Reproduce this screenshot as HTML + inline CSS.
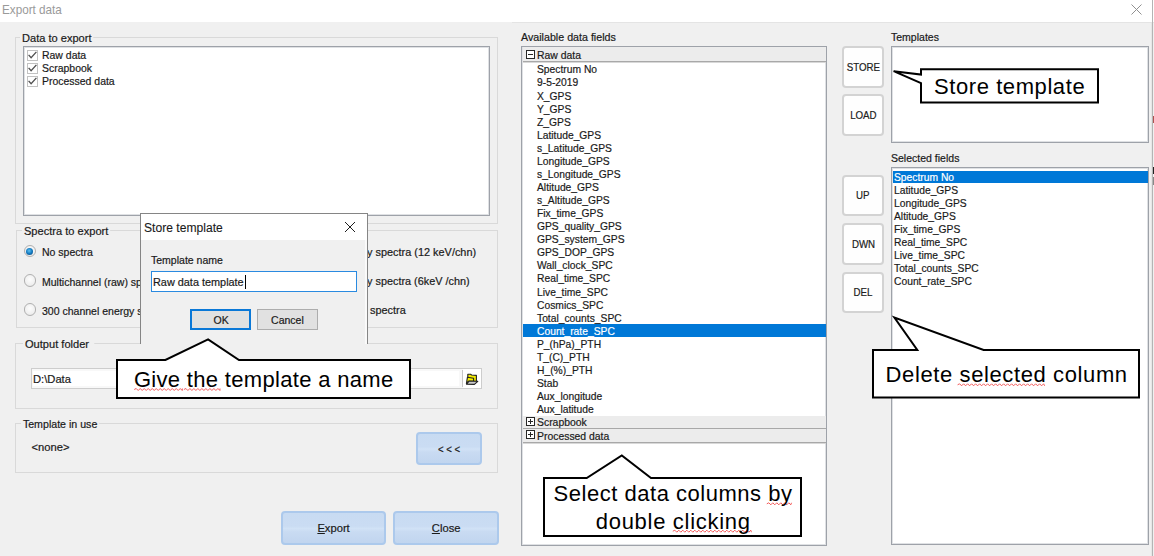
<!DOCTYPE html>
<html><head><meta charset="utf-8">
<style>
*{margin:0;padding:0;box-sizing:border-box}
html,body{width:1154px;height:556px;overflow:hidden;background:#f0f0f0;font-family:"Liberation Sans",sans-serif;color:#000}
body{position:relative}
.a{position:absolute}
.t{position:absolute;white-space:nowrap;line-height:1;font-size:11px;-webkit-text-stroke:0.2px currentColor}
.c{-webkit-text-stroke:0}
</style></head><body>
<div class="a" style="left:0px;top:0px;width:1154px;height:22px;background:#fff"></div>
<div class="a" style="left:512px;top:22px;width:642px;height:1px;background:#e4e4e4"></div>
<div class="t" style="left:2.00px;top:3.77px;font-size:12.2px;color:#9a9a9a;transform:scaleX(0.96);transform-origin:0 0;-webkit-text-stroke:0;">Export data</div>
<svg class="a" style="left:1130px;top:3px" width="13" height="13"><path d="M1.5 1.5L11.5 11.5M11.5 1.5L1.5 11.5" stroke="#909090" stroke-width="1"/></svg>
<div class="a" style="left:1150.5px;top:23px;width:1.5px;height:533px;background:#e6e6e6"></div>
<div class="a" style="left:1152px;top:0px;width:1px;height:556px;background:#b4b4b4"></div>
<div class="a" style="left:1153px;top:116px;width:1px;height:7px;background:#b05050"></div>
<div class="a" style="left:1153px;top:166.5px;width:1px;height:7px;background:#222"></div>
<div class="a" style="left:1153px;top:177px;width:1px;height:7.5px;background:#888"></div>
<div class="a" style="left:15px;top:37px;width:483px;height:187px;border:1px solid #d9d9d9"></div>
<div class="t" style="left:20.00px;top:33.02px;font-size:11.2px;color:#1a1a1a;transform:scaleX(0.99);transform-origin:0 0;padding:0 2px;background:#f0f0f0;">Data to export</div>
<div class="a" style="left:23px;top:46px;width:467px;height:170px;background:#fff;border:1px solid #9ea2a9;box-shadow:inset 0 0 0 1px #dfe1e4"></div>
<div class="a" style="left:27px;top:49.6px;width:11px;height:11px;border:1px solid #c2c2c2;background:#fff"></div>
<svg class="a" style="left:27px;top:49.6px" width="11" height="11"><path d="M1.6 4.9L4.1 7.7L9.4 1.9" fill="none" stroke="#505050" stroke-width="1.35"/></svg>
<div class="t" style="left:41.60px;top:50.12px;font-size:11.2px;color:#1a1a1a;transform:scaleX(0.935);transform-origin:0 0;">Raw data</div>
<div class="a" style="left:27px;top:62.6px;width:11px;height:11px;border:1px solid #c2c2c2;background:#fff"></div>
<svg class="a" style="left:27px;top:62.6px" width="11" height="11"><path d="M1.6 4.9L4.1 7.7L9.4 1.9" fill="none" stroke="#505050" stroke-width="1.35"/></svg>
<div class="t" style="left:41.60px;top:63.12px;font-size:11.2px;color:#1a1a1a;transform:scaleX(0.935);transform-origin:0 0;">Scrapbook</div>
<div class="a" style="left:27px;top:75.6px;width:11px;height:11px;border:1px solid #c2c2c2;background:#fff"></div>
<svg class="a" style="left:27px;top:75.6px" width="11" height="11"><path d="M1.6 4.9L4.1 7.7L9.4 1.9" fill="none" stroke="#505050" stroke-width="1.35"/></svg>
<div class="t" style="left:41.60px;top:76.12px;font-size:11.2px;color:#1a1a1a;transform:scaleX(0.935);transform-origin:0 0;">Processed data</div>
<div class="a" style="left:16px;top:230px;width:482px;height:98px;border:1px solid #d9d9d9"></div>
<div class="t" style="left:21.50px;top:226.02px;font-size:11.2px;color:#1a1a1a;transform:scaleX(0.99);transform-origin:0 0;padding:0 2px;background:#f0f0f0;">Spectra to export</div>
<div class="a" style="left:23.5px;top:244.95px;width:12.5px;height:12.5px;border-radius:50%;border:1px solid #b0b0b0;background:radial-gradient(circle at 50% 40%,#fdfdfd 0,#eeeeee 70%,#dedede 100%)"></div>
<div class="a" style="left:26.3px;top:247.50px;width:7px;height:7px;border-radius:50%;background:radial-gradient(circle at 45% 40%,#5ec2f2 0,#1279c0 50%,#0a3f70 100%)"></div>
<div class="t" style="left:41.60px;top:247.42px;font-size:11.2px;color:#1a1a1a;transform:scaleX(0.94);transform-origin:0 0;">No spectra</div>
<div class="a" style="left:23.5px;top:274.05px;width:12.5px;height:12.5px;border-radius:50%;border:1px solid #b0b0b0;background:radial-gradient(circle at 50% 40%,#fdfdfd 0,#eeeeee 70%,#dedede 100%)"></div>
<div class="t" style="left:41.60px;top:276.92px;font-size:11.2px;color:#1a1a1a;transform:scaleX(0.94);transform-origin:0 0;">Multichannel (raw) spectra</div>
<div class="a" style="left:23.5px;top:303.15px;width:12.5px;height:12.5px;border-radius:50%;border:1px solid #b0b0b0;background:radial-gradient(circle at 50% 40%,#fdfdfd 0,#eeeeee 70%,#dedede 100%)"></div>
<div class="t" style="left:41.60px;top:306.22px;font-size:11.2px;color:#1a1a1a;transform:scaleX(0.94);transform-origin:0 0;">300 channel energy spectra</div>
<div class="t" style="left:367.30px;top:247.42px;font-size:11.2px;color:#1a1a1a;transform:scaleX(0.975);transform-origin:0 0;">y spectra (12 keV/chn)</div>
<div class="t" style="left:367.30px;top:276.12px;font-size:11.2px;color:#1a1a1a;transform:scaleX(0.971);transform-origin:0 0;">y spectra (6keV /chn)</div>
<div class="t" style="left:369.80px;top:305.32px;font-size:11.2px;color:#1a1a1a;transform:scaleX(0.975);transform-origin:0 0;">spectra</div>
<div class="a" style="left:15px;top:343px;width:483px;height:66px;border:1px solid #d9d9d9"></div>
<div class="t" style="left:23.00px;top:339.02px;font-size:11.2px;color:#1a1a1a;transform:scaleX(0.99);transform-origin:0 0;padding:0 2px;background:#f0f0f0;">Output folder&nbsp;</div>
<div class="a" style="left:31px;top:368.2px;width:451px;height:20.5px;background:#f8f8f8;border:1px solid #cdcdcd"></div>
<div class="a" style="left:33px;top:370.5px;width:426px;height:15.5px;background:#fff"></div>
<div class="a" style="left:463px;top:369.2px;width:18px;height:18.5px;background:#fff"></div>
<div class="a" style="left:461.5px;top:370px;width:1.2px;height:16.5px;background:#c6c6c6"></div>
<div class="t" style="left:33.00px;top:374.22px;font-size:11.2px;color:#1a1a1a;transform:scaleX(1.0);transform-origin:0 0;">D:\Data</div>
<svg class="a" style="left:464px;top:372px" width="16" height="14" viewBox="0 0 16 14">
<path d="M3.8 2.2 L6.6 2.2 L7.6 3.0 L12.4 3.4 L12.4 9.5 L3.8 9.5 Z" fill="#f2ea00" stroke="#222" stroke-width="1.1" stroke-linejoin="round"/>
<path d="M3.4 5.3 L9.6 6.2 L9.6 9.1 L4.6 9.2 L2.4 11.6 Z" fill="#f7ef00" stroke="#222" stroke-width="1.1" stroke-linejoin="round"/>
<path d="M2.6 12.2 L10.4 12.4 L13.8 9.3 L5 9.1 Z" fill="#c9c9c9" stroke="#222" stroke-width="1.1" stroke-linejoin="round"/>
</svg>
<div class="a" style="left:15px;top:423px;width:483px;height:50px;border:1px solid #d9d9d9"></div>
<div class="t" style="left:20.50px;top:419.02px;font-size:11.2px;color:#1a1a1a;transform:scaleX(0.95);transform-origin:0 0;padding:0 2px;background:#f0f0f0;">Template in use</div>
<div class="t" style="left:31.50px;top:442.32px;font-size:11.2px;color:#1a1a1a;transform:scaleX(1.0);transform-origin:0 0;">&lt;none&gt;</div>
<div class="a" style="left:416.3px;top:432px;width:65.7px;height:33.2px;background:linear-gradient(#c8dbf2 0%,#cadcf3 44%,#d1e2f6 52%,#c9dbf2 62%,#c1d5ef 100%);border:2px solid #acc9ec;border-radius:4px"></div>
<div class="t" style="left:416.30px;width:65.70px;top:443.61px;font-size:10.5px;text-align:center;color:#1a1a1a;"><span style="display:inline-block;transform:scaleX(0.92);transform-origin:50% 0">&lt; &lt; &lt;</span></div>
<div class="a" style="left:280.8px;top:511px;width:105.5px;height:34px;background:linear-gradient(#c8dbf2 0%,#cadcf3 44%,#d1e2f6 52%,#c9dbf2 62%,#c1d5ef 100%);border:2px solid #acc9ec;border-radius:4px"></div>
<div class="t" style="left:280.80px;width:105.50px;top:522.82px;font-size:11.2px;text-align:center;color:#1a1a1a;"><span style="display:inline-block;transform:scaleX(1.0);transform-origin:50% 0"><u>E</u>xport</span></div>
<div class="a" style="left:393.3px;top:511px;width:105.7px;height:34px;background:linear-gradient(#c8dbf2 0%,#cadcf3 44%,#d1e2f6 52%,#c9dbf2 62%,#c1d5ef 100%);border:2px solid #acc9ec;border-radius:4px"></div>
<div class="t" style="left:393.30px;width:105.70px;top:522.82px;font-size:11.2px;text-align:center;color:#1a1a1a;"><span style="display:inline-block;transform:scaleX(1.0);transform-origin:50% 0"><u>C</u>lose</span></div>
<div class="a" style="left:140px;top:213px;width:228px;height:130.5px;background:#f0f0f0;border:1px solid #858585;border-bottom:none"></div>
<div class="a" style="left:141px;top:214px;width:226px;height:26px;background:#fff"></div>
<div class="a" style="left:365px;top:240px;width:1.5px;height:103.5px;background:#fafafa"></div>
<div class="t" style="left:144.30px;top:221.79px;font-size:12.3px;color:#1a1a1a;transform:scaleX(0.985);transform-origin:0 0;-webkit-text-stroke:0.1px currentColor;">Store template</div>
<svg class="a" style="left:344px;top:221px" width="12" height="12"><path d="M1 1L11 11M11 1L1 11" stroke="#1e1e1e" stroke-width="1"/></svg>
<div class="t" style="left:150.70px;top:255.22px;font-size:11.2px;color:#1a1a1a;transform:scaleX(0.94);transform-origin:0 0;">Template name</div>
<div class="a" style="left:151px;top:271.4px;width:206px;height:20.5px;background:#fff;border:1px solid #2a8ae0"></div>
<div class="t" style="left:153.30px;top:276.52px;font-size:11.2px;color:#1a1a1a;transform:scaleX(0.972);transform-origin:0 0;">Raw data template</div>
<div class="a" style="left:245.3px;top:275px;width:1px;height:14px;background:#000"></div>
<div class="a" style="left:190.2px;top:308.5px;width:61px;height:21px;background:#e1e1e1;border:2px solid #0a78d7"></div>
<div class="t" style="left:190.20px;width:61.00px;top:314.82px;font-size:11.2px;text-align:center;color:#1a1a1a;"><span style="display:inline-block;transform:scaleX(0.94);transform-origin:50% 0">OK</span></div>
<div class="a" style="left:257.2px;top:308.5px;width:61.2px;height:21px;background:#e1e1e1;border:1px solid #adadad"></div>
<div class="t" style="left:257.20px;width:61.20px;top:314.82px;font-size:11.2px;text-align:center;color:#1a1a1a;"><span style="display:inline-block;transform:scaleX(0.94);transform-origin:50% 0">Cancel</span></div>
<div class="t" style="left:521.20px;top:32.12px;font-size:11.2px;color:#1a1a1a;transform:scaleX(0.955);transform-origin:0 0;">Available data fields</div>
<div class="a" style="left:521px;top:46px;width:306px;height:499.5px;background:#fff;border:1px solid #9ea2a9;box-shadow:inset 0 0 0 1px #dfe1e4"></div>
<div class="a" style="left:523px;top:47px;width:303px;height:15px;background:#ececec;border-bottom:1px solid #a8a8a8;box-shadow:0 1px 0 #d8d8d8"></div>
<div class="a" style="left:526px;top:50.0px;width:9.2px;height:9.2px;border:1px solid #262626;background:#fff"></div>
<div class="a" style="left:528px;top:54.1px;width:5.2px;height:1.1px;background:#262626"></div>
<div class="t" style="left:536.50px;top:50.42px;font-size:11.2px;color:#1a1a1a;transform:scaleX(0.93);transform-origin:0 0;">Raw data</div>
<div class="t" style="left:536.80px;top:64.42px;font-size:11.2px;color:#1a1a1a;transform:scaleX(0.92);transform-origin:0 0;">Spectrum No</div>
<div class="t" style="left:536.80px;top:77.48px;font-size:11.2px;color:#1a1a1a;transform:scaleX(0.92);transform-origin:0 0;">9-5-2019</div>
<div class="t" style="left:536.80px;top:90.55px;font-size:11.2px;color:#1a1a1a;transform:scaleX(0.92);transform-origin:0 0;">X_GPS</div>
<div class="t" style="left:536.80px;top:103.61px;font-size:11.2px;color:#1a1a1a;transform:scaleX(0.92);transform-origin:0 0;">Y_GPS</div>
<div class="t" style="left:536.80px;top:116.68px;font-size:11.2px;color:#1a1a1a;transform:scaleX(0.92);transform-origin:0 0;">Z_GPS</div>
<div class="t" style="left:536.80px;top:129.74px;font-size:11.2px;color:#1a1a1a;transform:scaleX(0.92);transform-origin:0 0;">Latitude_GPS</div>
<div class="t" style="left:536.80px;top:142.81px;font-size:11.2px;color:#1a1a1a;transform:scaleX(0.92);transform-origin:0 0;">s_Latitude_GPS</div>
<div class="t" style="left:536.80px;top:155.87px;font-size:11.2px;color:#1a1a1a;transform:scaleX(0.92);transform-origin:0 0;">Longitude_GPS</div>
<div class="t" style="left:536.80px;top:168.94px;font-size:11.2px;color:#1a1a1a;transform:scaleX(0.92);transform-origin:0 0;">s_Longitude_GPS</div>
<div class="t" style="left:536.80px;top:182.00px;font-size:11.2px;color:#1a1a1a;transform:scaleX(0.92);transform-origin:0 0;">Altitude_GPS</div>
<div class="t" style="left:536.80px;top:195.07px;font-size:11.2px;color:#1a1a1a;transform:scaleX(0.92);transform-origin:0 0;">s_Altitude_GPS</div>
<div class="t" style="left:536.80px;top:208.13px;font-size:11.2px;color:#1a1a1a;transform:scaleX(0.92);transform-origin:0 0;">Fix_time_GPS</div>
<div class="t" style="left:536.80px;top:221.20px;font-size:11.2px;color:#1a1a1a;transform:scaleX(0.92);transform-origin:0 0;">GPS_quality_GPS</div>
<div class="t" style="left:536.80px;top:234.26px;font-size:11.2px;color:#1a1a1a;transform:scaleX(0.92);transform-origin:0 0;">GPS_system_GPS</div>
<div class="t" style="left:536.80px;top:247.33px;font-size:11.2px;color:#1a1a1a;transform:scaleX(0.92);transform-origin:0 0;">GPS_DOP_GPS</div>
<div class="t" style="left:536.80px;top:260.39px;font-size:11.2px;color:#1a1a1a;transform:scaleX(0.92);transform-origin:0 0;">Wall_clock_SPC</div>
<div class="t" style="left:536.80px;top:273.46px;font-size:11.2px;color:#1a1a1a;transform:scaleX(0.92);transform-origin:0 0;">Real_time_SPC</div>
<div class="t" style="left:536.80px;top:286.52px;font-size:11.2px;color:#1a1a1a;transform:scaleX(0.92);transform-origin:0 0;">Live_time_SPC</div>
<div class="t" style="left:536.80px;top:299.59px;font-size:11.2px;color:#1a1a1a;transform:scaleX(0.92);transform-origin:0 0;">Cosmics_SPC</div>
<div class="t" style="left:536.80px;top:312.65px;font-size:11.2px;color:#1a1a1a;transform:scaleX(0.92);transform-origin:0 0;">Total_counts_SPC</div>
<div class="a" style="left:523px;top:323.6px;width:303px;height:13px;background:#0078d7"></div>
<div class="t" style="left:536.80px;top:325.72px;font-size:11.2px;color:#fff;transform:scaleX(0.92);transform-origin:0 0;">Count_rate_SPC</div>
<div class="t" style="left:536.80px;top:338.78px;font-size:11.2px;color:#1a1a1a;transform:scaleX(0.92);transform-origin:0 0;">P_(hPa)_PTH</div>
<div class="t" style="left:536.80px;top:351.85px;font-size:11.2px;color:#1a1a1a;transform:scaleX(0.92);transform-origin:0 0;">T_(C)_PTH</div>
<div class="t" style="left:536.80px;top:364.91px;font-size:11.2px;color:#1a1a1a;transform:scaleX(0.92);transform-origin:0 0;">H_(%)_PTH</div>
<div class="t" style="left:536.80px;top:377.98px;font-size:11.2px;color:#1a1a1a;transform:scaleX(0.92);transform-origin:0 0;">Stab</div>
<div class="t" style="left:536.80px;top:391.04px;font-size:11.2px;color:#1a1a1a;transform:scaleX(0.92);transform-origin:0 0;">Aux_longitude</div>
<div class="t" style="left:536.80px;top:404.11px;font-size:11.2px;color:#1a1a1a;transform:scaleX(0.92);transform-origin:0 0;">Aux_latitude</div>
<div class="a" style="left:523px;top:416px;width:303px;height:13px;background:#ececec;border-bottom:1px solid #a8a8a8;box-shadow:0 1px 0 #d8d8d8"></div>
<div class="a" style="left:526px;top:417.2px;width:9.2px;height:9.2px;border:1px solid #262626;background:#fff"></div>
<div class="a" style="left:528px;top:421.3px;width:5.2px;height:1.1px;background:#262626"></div>
<div class="a" style="left:530.05px;top:419.2px;width:1.1px;height:5.2px;background:#262626"></div>
<div class="t" style="left:536.50px;top:416.62px;font-size:11.2px;color:#1a1a1a;transform:scaleX(0.93);transform-origin:0 0;">Scrapbook</div>
<div class="a" style="left:523px;top:429px;width:303px;height:14px;background:#ececec;border-bottom:1px solid #a8a8a8;box-shadow:0 1px 0 #d8d8d8"></div>
<div class="a" style="left:526px;top:430.2px;width:9.2px;height:9.2px;border:1px solid #262626;background:#fff"></div>
<div class="a" style="left:528px;top:434.3px;width:5.2px;height:1.1px;background:#262626"></div>
<div class="a" style="left:530.05px;top:432.2px;width:1.1px;height:5.2px;background:#262626"></div>
<div class="t" style="left:536.50px;top:430.82px;font-size:11.2px;color:#1a1a1a;transform:scaleX(0.93);transform-origin:0 0;">Processed data</div>
<div class="a" style="left:842px;top:46.3px;width:42px;height:41.5px;background:#fefefe;border:2px solid #d3d3d3;border-radius:4px"></div>
<div class="t" style="left:842.00px;width:42.00px;top:61.63px;font-size:11.3px;text-align:center;color:#202020;"><span style="display:inline-block;transform:scaleX(0.86);transform-origin:50% 0">STORE</span></div>
<div class="a" style="left:842px;top:94.0px;width:42px;height:41.5px;background:#fefefe;border:2px solid #d3d3d3;border-radius:4px"></div>
<div class="t" style="left:842.00px;width:42.00px;top:109.73px;font-size:11.3px;text-align:center;color:#202020;"><span style="display:inline-block;transform:scaleX(0.86);transform-origin:50% 0">LOAD</span></div>
<div class="a" style="left:842px;top:174.8px;width:42px;height:41.5px;background:#fefefe;border:2px solid #d3d3d3;border-radius:4px"></div>
<div class="t" style="left:842.00px;width:42.00px;top:190.13px;font-size:11.3px;text-align:center;color:#202020;"><span style="display:inline-block;transform:scaleX(0.86);transform-origin:50% 0">UP</span></div>
<div class="a" style="left:842px;top:223.0px;width:42px;height:41.5px;background:#fefefe;border:2px solid #d3d3d3;border-radius:4px"></div>
<div class="t" style="left:842.00px;width:42.00px;top:238.53px;font-size:11.3px;text-align:center;color:#202020;"><span style="display:inline-block;transform:scaleX(0.86);transform-origin:50% 0">DWN</span></div>
<div class="a" style="left:842px;top:271.7px;width:42px;height:41.5px;background:#fefefe;border:2px solid #d3d3d3;border-radius:4px"></div>
<div class="t" style="left:842.00px;width:42.00px;top:286.73px;font-size:11.3px;text-align:center;color:#202020;"><span style="display:inline-block;transform:scaleX(0.86);transform-origin:50% 0">DEL</span></div>
<div class="t" style="left:890.80px;top:32.42px;font-size:11.2px;color:#1a1a1a;transform:scaleX(0.94);transform-origin:0 0;">Templates</div>
<div class="a" style="left:890.5px;top:46.3px;width:258.8px;height:97px;background:#fff;border:1px solid #9ea2a9;box-shadow:inset 0 0 0 1px #dfe1e4"></div>
<div class="t" style="left:890.60px;top:153.02px;font-size:11.2px;color:#1a1a1a;transform:scaleX(0.94);transform-origin:0 0;">Selected fields</div>
<div class="a" style="left:890.8px;top:167.3px;width:258.5px;height:378px;background:#fff;border:1px solid #9ea2a9;box-shadow:inset 0 0 0 1px #dfe1e4"></div>
<div class="a" style="left:893.2px;top:170.5px;width:254.5px;height:12px;background:#0078d7"></div>
<div class="t" style="left:894.40px;top:171.62px;font-size:11.2px;color:#fff;transform:scaleX(0.92);transform-origin:0 0;">Spectrum No</div>
<div class="t" style="left:894.40px;top:184.62px;font-size:11.2px;color:#1a1a1a;transform:scaleX(0.92);transform-origin:0 0;">Latitude_GPS</div>
<div class="t" style="left:894.40px;top:197.62px;font-size:11.2px;color:#1a1a1a;transform:scaleX(0.92);transform-origin:0 0;">Longitude_GPS</div>
<div class="t" style="left:894.40px;top:210.62px;font-size:11.2px;color:#1a1a1a;transform:scaleX(0.92);transform-origin:0 0;">Altitude_GPS</div>
<div class="t" style="left:894.40px;top:223.62px;font-size:11.2px;color:#1a1a1a;transform:scaleX(0.92);transform-origin:0 0;">Fix_time_GPS</div>
<div class="t" style="left:894.40px;top:236.62px;font-size:11.2px;color:#1a1a1a;transform:scaleX(0.92);transform-origin:0 0;">Real_time_SPC</div>
<div class="t" style="left:894.40px;top:249.62px;font-size:11.2px;color:#1a1a1a;transform:scaleX(0.92);transform-origin:0 0;">Live_time_SPC</div>
<div class="t" style="left:894.40px;top:262.62px;font-size:11.2px;color:#1a1a1a;transform:scaleX(0.92);transform-origin:0 0;">Total_counts_SPC</div>
<div class="t" style="left:894.40px;top:275.62px;font-size:11.2px;color:#1a1a1a;transform:scaleX(0.92);transform-origin:0 0;">Count_rate_SPC</div>
<svg class="a" style="left:0;top:0" width="1154" height="556"><polygon points="117,360 165.4,360 208.1,339.3 239,360 410,360 410,398 117,398" fill="#fff" stroke="#000" stroke-width="2" stroke-linejoin="miter"/><path d="M134.2 389.5 L136.2 388.5 L138.2 390.5 L140.2 388.5 L142.2 390.5 L144.2 388.5 L146.2 390.5 L148.2 388.5 L150.2 390.5 L152.2 388.5 L154.2 390.5 L156.2 388.5 L158.2 390.5 L160.2 388.5 L162.2 390.5 L164.2 388.5 L166.2 390.5 L168.2 388.5 L170.2 390.5 L172.2 388.5 L174.2 390.5 L176.2 388.5 L178.2 390.5 L180.2 388.5 L182.2 390.5 L182.4 388.5" fill="none" stroke="#f04848" stroke-width="0.9"/><path d="M183.9 389.5 L185.9 388.5 L187.9 390.5 L189.9 388.5 L191.9 390.5 L193.9 388.5 L195.9 390.5 L197.9 388.5 L199.9 390.5 L201.9 388.5 L203.9 390.5 L205.9 388.5 L207.9 390.5 L209.9 388.5 L211.9 390.5 L213.9 388.5 L215.9 390.5 L217.9 388.5 L219.9 390.5 L220 388.5" fill="none" stroke="#f04848" stroke-width="0.9"/></svg>
<div class="t" style="left:133.90px;top:369.48px;font-size:22px;color:#000;letter-spacing:0.32px;-webkit-text-stroke:0;">Give the template a name</div>
<svg class="a" style="left:0;top:0" width="1154" height="556"><polygon points="544,478 586.7,478 621.8,455.5 651,478 801,478 801,536 544,536" fill="#fff" stroke="#000" stroke-width="2" stroke-linejoin="miter"/><path d="M766.8 503.8 L768.8 502.8 L770.8 504.8 L772.8 502.8 L774.8 504.8 L776.8 502.8 L778.8 504.8 L780.8 502.8 L782.8 504.8 L784.8 502.8 L786.8 504.8 L788.8 502.8 L790.8 504.8 L791.5 502.8" fill="none" stroke="#f04848" stroke-width="0.9"/><path d="M672.8 531.2 L674.8 530.2 L676.8 532.2 L678.8 530.2 L680.8 532.2 L682.8 530.2 L684.8 532.2 L686.8 530.2 L688.8 532.2 L690.8 530.2 L692.8 532.2 L694.8 530.2 L696.8 532.2 L698.8 530.2 L700.8 532.2 L702.8 530.2 L704.8 532.2 L706.8 530.2 L708.8 532.2 L710.8 530.2 L712.8 532.2 L714.8 530.2 L716.8 532.2 L718.8 530.2 L720.8 532.2 L722.8 530.2 L724.8 532.2 L726.8 530.2 L728.8 532.2 L730.8 530.2 L732.8 532.2 L734.8 530.2 L736.8 532.2 L738.8 530.2 L740.8 532.2 L742.8 530.2 L744.8 532.2 L746.8 530.2 L748.8 532.2 L750.8 530.2 L751.4 532.2" fill="none" stroke="#f04848" stroke-width="0.9"/></svg>
<div class="t" style="left:553.60px;top:482.88px;font-size:22px;color:#000;letter-spacing:0.52px;-webkit-text-stroke:0;">Select data columns by</div>
<div class="t" style="left:595.80px;top:510.88px;font-size:22px;color:#000;letter-spacing:0.7px;-webkit-text-stroke:0;">double clicking</div>
<svg class="a" style="left:0;top:0" width="1154" height="556"><polygon points="921,69.2 1098,69.2 1098,102.6 921,102.6 921,83.1 893.6,71.2 921,74.6" fill="#fff" stroke="#000" stroke-width="2" stroke-linejoin="miter"/></svg>
<div class="t" style="left:934.00px;top:76.08px;font-size:22px;color:#000;letter-spacing:0.58px;-webkit-text-stroke:0;">Store template</div>
<svg class="a" style="left:0;top:0" width="1154" height="556"><polygon points="873,350 917.3,350 894.4,317.6 983.6,350 1139,350 1139,397.5 873,397.5" fill="#fff" stroke="#000" stroke-width="2" stroke-linejoin="miter"/><path d="M957.6 384.8 L959.6 383.8 L961.6 385.8 L963.6 383.8 L965.6 385.8 L967.6 383.8 L969.6 385.8 L971.6 383.8 L973.6 385.8 L975.6 383.8 L977.6 385.8 L979.6 383.8 L981.6 385.8 L983.6 383.8 L985.6 385.8 L987.6 383.8 L989.6 385.8 L991.6 383.8 L993.6 385.8 L995.6 383.8 L997.6 385.8 L999.6 383.8 L1001.6 385.8 L1003.6 383.8 L1005.6 385.8 L1007.6 383.8 L1009.6 385.8 L1011.6 383.8 L1013.6 385.8 L1015.6 383.8 L1017.6 385.8 L1019.6 383.8 L1021.6 385.8 L1023.6 383.8 L1025.6 385.8 L1027.6 383.8 L1029.6 385.8 L1031.6 383.8 L1033.6 385.8 L1035.6 383.8 L1037.6 385.8 L1039.6 383.8 L1041.6 385.8 L1043.6 383.8 L1044.7 385.8" fill="none" stroke="#f04848" stroke-width="0.9"/></svg>
<div class="t" style="left:885.60px;top:364.08px;font-size:22px;color:#000;letter-spacing:0.61px;-webkit-text-stroke:0;">Delete selected column</div>
</body></html>
